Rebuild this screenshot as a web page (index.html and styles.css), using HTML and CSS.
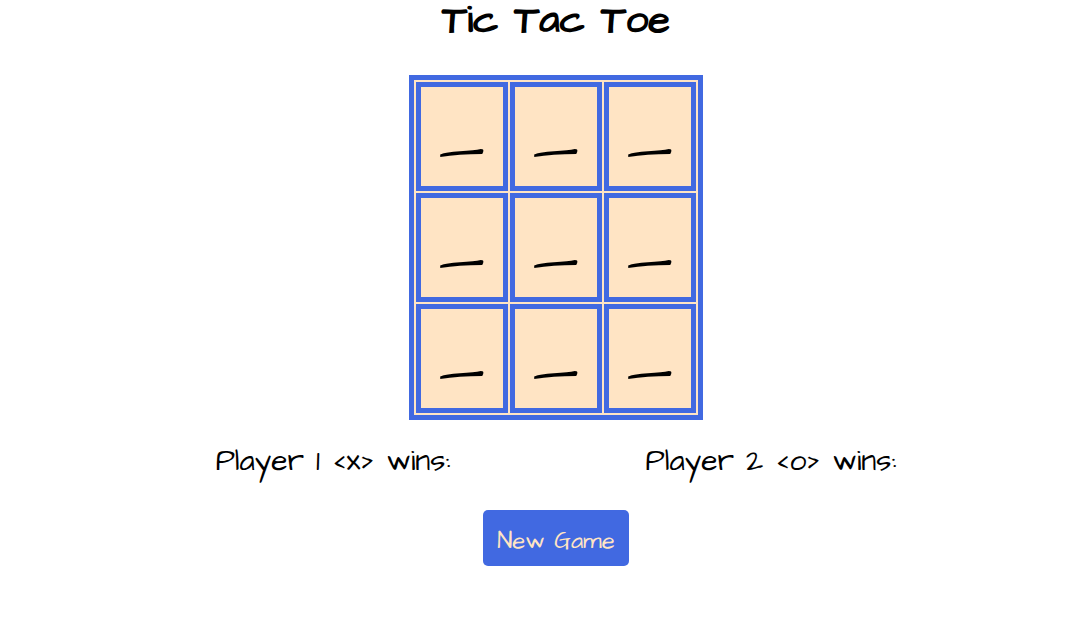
FILE: index.html
```html
<!DOCTYPE html>
<html lang="en">
<head>
<meta charset="utf-8">
<title>Tic Tac Toe</title>
<link rel="stylesheet" href="styles.css">
</head>
<body>
<main class="game">
  <h1 class="title">Tic Tac Toe</h1>
  <table class="board">
    <tbody>
      <tr><td class="cell">_</td><td class="cell">_</td><td class="cell">_</td></tr>
      <tr><td class="cell">_</td><td class="cell">_</td><td class="cell">_</td></tr>
      <tr><td class="cell">_</td><td class="cell">_</td><td class="cell">_</td></tr>
    </tbody>
  </table>
  <div class="scores">
    <p class="score">Player 1 &lt;x&gt; wins:</p>
    <p class="score">Player 2 &lt;o&gt; wins:</p>
  </div>
  <button class="new-game" type="button">New Game</button>
</main>
</body>
</html>
```
FILE: styles.css
```css
body {
  margin: 0;
  background: white;
  color: black;
  font-family: "Architects Daughter", Lato, sans-serif;
}

.game {
  display: flex;
  flex-direction: column;
  align-items: center;
  padding-left: 32px;
}

.title {
  margin: 0 0 33px;
  font-size: 40px;
  line-height: 42px;
}

.board {
  border: 5px solid royalblue;
  border-spacing: 2px;
  background: bisque;
}

.cell {
  box-sizing: border-box;
  width: 92px;
  padding: 1px;
  border: 5px solid royalblue;
  font-size: 70px;
  line-height: 97px;
  text-align: center;
  cursor: pointer;
}

.scores {
  display: flex;
  justify-content: space-around;
  align-self: stretch;
  padding: 0 86px;
}

.score {
  margin: 21px 0 29px;
  font-size: 30px;
  line-height: 40px;
}

.new-game {
  padding: 15px 14px 9px;
  border: 0;
  border-radius: 5px;
  background: royalblue;
  color: bisque;
  font-family: inherit;
  font-size: 24px;
  line-height: 32px;
  cursor: pointer;
}
```
